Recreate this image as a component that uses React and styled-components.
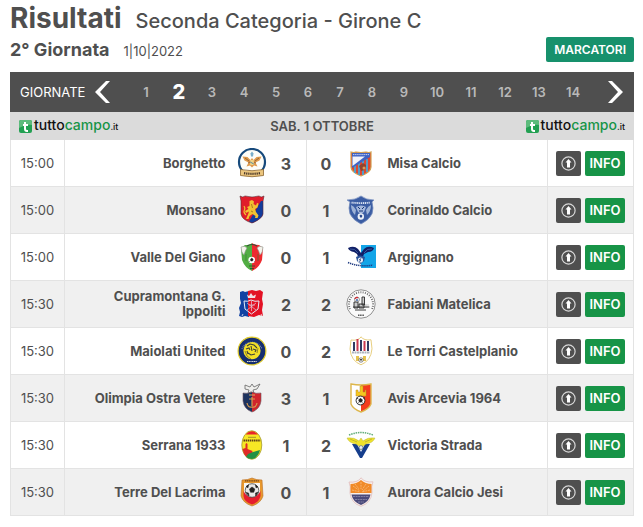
import React, { useState } from "react";
import styled, { createGlobalStyle, css } from "styled-components";

const GlobalStyle = createGlobalStyle`
  * {
    box-sizing: border-box;
  }

  body {
    margin: 0;
    background: #fff;
    color: #4f4f4f;
    font-family: Inter, Roboto, "Liberation Sans", sans-serif;
    font-size: 13px;
  }

  button {
    margin: 0;
    padding: 0;
    border: 0;
    background: none;
    color: inherit;
    font: inherit;
    cursor: pointer;
  }
`;

const Page = styled.main`
  padding: 2px 9px 10px 10px;
`;

const Title = styled.h1`
  display: flex;
  align-items: baseline;
  gap: 14px;
  margin: 0;
  font-size: 28px;
  line-height: 32px;
  font-weight: 700;
  white-space: nowrap;
`;

const Category = styled.span`
  font-size: 20px;
  line-height: 24px;
  font-weight: 500;
`;

const SubHeader = styled.div`
  display: flex;
  align-items: center;
  justify-content: space-between;
  padding: 3px 0 10px;
`;

const Round = styled.h2`
  display: flex;
  align-items: baseline;
  gap: 14px;
  margin: 0;
  font-size: 18px;
  line-height: 24px;
  font-weight: 700;
`;

const RoundDate = styled.span`
  font-size: 13px;
  line-height: 16px;
  font-weight: 400;
`;

const ScorersLink = styled.a`
  padding: 0 8px;
  border-radius: 2px;
  background: #17916c;
  color: #fff;
  font-size: 12px;
  line-height: 25px;
  font-weight: 600;
  text-decoration: none;
`;

const RoundNav = styled.nav`
  display: flex;
  align-items: center;
  height: 40px;
  padding: 0 10px;
  background: #4f4f4f;
  color: #fff;
`;

const NavLabel = styled.span`
  width: 74px;
  font-size: 13px;
`;

const Arrow = styled.button`
  display: flex;
  flex: none;

  svg {
    width: 18px;
    height: 22px;
  }
`;

const RoundList = styled.ol`
  display: flex;
  flex: 1;
  margin: 0 16px 0 18px;
  padding: 0;
  list-style: none;
`;

const RoundItem = styled.li`
  flex: ${({ $wide }) => ($wide ? 34 : 32)} 1 0;
  text-align: center;
`;

const RoundButton = styled.button`
  color: #b9b9b9;
  font-size: 13px;
  line-height: 24px;
  font-weight: 600;

  ${({ $active }) =>
    $active &&
    css`
      color: #fff;
      font-size: 20px;
      font-weight: 800;
    `}
`;

const DayBar = styled.div`
  display: flex;
  align-items: center;
  justify-content: space-between;
  height: 28px;
  padding: 0 9px;
  background: #dbdbdb;
`;

const Day = styled.h3`
  margin: 0;
  font-size: 13px;
  font-weight: 600;
`;

const Brand = styled.a`
  display: flex;
  align-items: center;
  gap: 2px;
  color: #111;
  font-family: Inter, sans-serif;
  font-size: 14px;
  line-height: 16px;
  font-weight: 500;
  text-decoration: none;

  svg {
    width: 13px;
    height: 13px;
  }

  b {
    color: #179447;
    font-weight: 500;
  }

  small {
    font-size: 9px;
  }
`;

const Results = styled.table`
  width: 100%;
  table-layout: fixed;
  border-collapse: separate;
  border-spacing: 0;
`;

const Row = styled.tr`
  &:nth-child(even) {
    background: #f0f0f0;
  }
`;

const Cell = styled.td`
  height: 47px;
  padding: 0;
  border-bottom: 1px solid #e3e3e3;
`;

const TimeCell = styled(Cell)`
  border-left: 1px solid #e3e3e3;
  border-right: 1px solid #e3e3e3;
  text-align: center;
`;

const TeamCell = styled(Cell)`
  padding: ${({ $home }) => ($home ? "0 11px 0 20px" : "0 20px 0 12px")};
  text-align: ${({ $home }) => ($home ? "right" : "left")};
  line-height: 15px;
  font-weight: 700;
`;

const TeamName = styled.span`
  display: inline-block;
  max-width: 140px;
`;

const CrestCell = styled(Cell)`
  svg {
    display: block;
    width: 30px;
    height: 30px;
  }
`;

const ScoreCell = styled(Cell)`
  border-right: ${({ $home }) => ($home ? "1px solid #e3e3e3" : "0")};
  padding-top: 2px;
  font-size: 16px;
  font-weight: 700;
  text-align: center;
`;

const ActionCell = styled(Cell)`
  border-left: 1px solid #e3e3e3;
  border-right: 1px solid #e3e3e3;
`;

const Actions = styled.div`
  display: flex;
  justify-content: center;
  gap: 4px;
`;

const UpButton = styled.button`
  display: grid;
  place-items: center;
  width: 25px;
  height: 25px;
  border-radius: 2px;
  background: #4f4f4f;

  svg {
    width: 15px;
    height: 15px;
  }
`;

const InfoLink = styled.a`
  width: 40px;
  border-radius: 2px;
  background: #179447;
  color: #fff;
  font-size: 13px;
  line-height: 25px;
  font-weight: 600;
  text-align: center;
  text-decoration: none;
`;

const crests = {
  borghetto: (
    <>
      <circle cx="15" cy="14" r="13" fill="#fdfdf8" stroke="#174a7c" strokeWidth="2.2" />
      <path d="M5.5 8.5l5 .5 3 3 1.5-2 1.5 2 3-3 5-.5-2 4-4 2 2 4-3.500-1-2 2-2-2-3.500 1 2-4-4-2z" fill="#df9a4c" />
      <path d="M8 10l4 3M22 10l-4 3M11 15l2-1M19 15l-2-1" stroke="#7a4f2a" strokeWidth=".7" />
      <path d="M13.5 5.5L15 3.5l1.5 2-.5 3h-2z" fill="#79aecb" />
      <path d="M13.2 12h3.600v5h-3.600z" fill="#f0d384" />
      <path d="M13.2 14l3.6 2" stroke="#2f7aa8" strokeWidth=".8" />
      <path d="M3.5 21.5q11.5 2.5 23 0v6q-11.5 2.5-23 0z" fill="#ecc67e" stroke="#8a6430" strokeWidth=".8" />
      <path d="M7 25.2q8 1.2 16 0" fill="none" stroke="#4a382a" strokeWidth="2.2" strokeDasharray="1.3 .8" />
    </>
  ),
  misa: (
    <>
      <path d="M5 4q3 1 5 0 5 1 10 0 3 1 5 0v15q0 5-10 9-10-4-10-9z" fill="#e0462f" stroke="#cfa052" strokeWidth="1.2" />
      <path d="M9 16v9M13 14v13M17 12v15M21 11v13" stroke="#45a7d8" strokeWidth="1.8" />
      <path d="M6 5h18v4L6 20z" fill="#3f63c5" />
      <path d="M6.5 8.5H19L6.5 18z" fill="#f2f3fa" />
      <path d="M7 6.6h16" stroke="#c9d3f0" strokeWidth="1" strokeDasharray="1.4 .7" />
      <path d="M13 18l4-3 3 2-1 5-4 1z" fill="#8f432f" />
      <circle cx="18" cy="20" r="1.5" fill="#d99a56" />
    </>
  ),
  monsano: (
    <>
      <path d="M3 1q3 2 5 0 7 2 14 0 2 2 5 0l-1 5v13q-1 5-11 9Q5 25 4 19V6z" fill="#e01c2b" />
      <path d="M26 6v13q-1 5-11 9l-3-1.5L24 6z" fill="#123c9c" />
      <path d="M3 1q3 2 5 0 7 2 14 0 2 2 5 0l-1 5v13q-1 5-11 9Q5 25 4 19V6z" fill="none" stroke="#5a2632" strokeWidth=".6" />
      <path d="M12.5 6l2.5-1 2 1.5-.5 2.5L19 10.5l1-2.5 1.5.5-1 4-2.5 1.5 1 3 2.5 3.5-1 2.5H18l.5-2-3-2-3 2-1 3H9l2-4.5 1-3-3 1.5-1-2 3.5-2-1.5-2 2.5-1z" fill="#f1c232" />
      <path d="M9 20q-3-3-1.5-5 1-2-.5-4" fill="none" stroke="#f1c232" strokeWidth="1.2" />
      <path d="M14.5 9l1 4M14 16l2 1" stroke="#7d4a10" strokeWidth=".6" />
    </>
  ),
  corinaldo: (
    <>
      <path d="M15 1q5 4 13 4l-2 2q2 6 0 12-3 6-11 10Q7 25 4 19 2 13 4 7L1 5q9 0 14-4z" fill="#3b5da3" stroke="#7b92c0" strokeWidth=".8" />
      <path d="M5.5 7.6q9.5 1 19 0" fill="none" stroke="#dbe3f2" strokeWidth="1.9" strokeDasharray="1.2 .7" />
      <path d="M5 10q3 1 5 5l-1 5q-4-4-4-10zM25 10q-3 1-5 5l1 5q4-4 4-10z" fill="#9db2d6" />
      <path d="M10 12q5-3 10 0l-2 5-3 2-3-2z" fill="#a5b8dc" />
      <path d="M12 12l2 2M18 12l-2 2M13 16h4" stroke="#173777" />
      <circle cx="14.8" cy="21.5" r="3.2" fill="#edf1f8" />
      <path d="M13.5 20.5l1.5-1 1.4 1.2-.6 1.8h-1.6z" fill="#28478d" />
    </>
  ),
  valle: (
    <>
      <path d="M15 1q2 2 7 2l4 3-1 12q-3 8-10 11z" fill="#ed2a2f" />
      <path d="M15 1q-2 2-7 2L4 6l1 12q3 8 10 11z" fill="#52ad43" />
      <path d="M10 4q5-3 10 0" fill="none" stroke="#354c37" strokeWidth="1.1" />
      <path d="M4 5q4-2 6 1-2 3-3 7-3-3-3-8zM26 5q-4-2-6 1 2 3 3 7 3-3 3-8z" fill="#f4f4ec" stroke="#8c9289" strokeWidth=".6" />
      <path d="M9 12v7M21 12v7" stroke="#37782f" strokeWidth=".6" />
      <circle cx="14.7" cy="18" r="3.3" fill="#fff" />
      <path d="M13.4 17.3l1.4-1.2 1.4 1.2-.7 1.7h-1.6zM11.8 19l1 1M17 20l.8-.8" fill="#222" stroke="#222" strokeWidth=".5" />
      <path d="M12 24h6M13 26.5h4" stroke="#274b2c" strokeWidth=".8" />
    </>
  ),
  argignano: (
    <>
      <path d="M15 3h15v23H15z" fill="#13a5e8" />
      <path d="M2 6q6-3 10 1l3 4 3-4q4-4 10-1-1 4-6 4l-4 2-2 5h-3l-2-5-3-2Q3 9 2 6z" fill="#101f66" />
      <path d="M4 7q5-1 8 4M26 7q-5-1-8 4" fill="none" stroke="#4668ab" strokeWidth=".8" />
      <path d="M10 15q4-3 9 0l-1 4-3.5 3-3.5-3z" fill="#2a5299" />
      <circle cx="14.4" cy="18" r="2.6" fill="#e8eef6" />
      <path d="M13 17l2 2M15 16l-1.5 4" stroke="#24417c" strokeWidth=".7" />
      <path d="M2 20.5q12 5 25 2.5" fill="none" stroke="#203c82" strokeWidth="1.5" strokeDasharray="1.3 .8" />
    </>
  ),
  cupramontana: (
    <>
      <path d="M3 3l3-1 2 1 4-1v26l-4-1-3 1-3-1 1-4-1-4 2-5-1-4z" fill="#1242a3" />
      <path d="M11 2l4-1 4 1 4-1 3 2-1 7 1 5-1 6 1 6-4-1-5 2-6-1z" fill="#e31225" />
      <path d="M10 5.5l2 1.5 2-3 2 3 3-1.5-1 3.5h-7z" fill="#f0dfe5" />
      <path d="M7 12q4 1 7-1 4 2 8 1l-1 8-6.5 5L8 20z" fill="none" stroke="#e6eaf5" strokeWidth="1" />
      <path d="M10 14l9 7M19 14l-9 7M12 16h6M14.5 12v10" stroke="#dfc9d8" strokeWidth=".7" />
      <path d="M6 25l-1 2M24 25l1 2" stroke="#f1f1f1" strokeWidth=".8" />
    </>
  ),
  fabiani: (
    <>
      <circle cx="15" cy="15" r="14.2" fill="#fafafa" stroke="#777" strokeWidth=".8" />
      <path d="M4 20A12 12 0 1 1 26 20" fill="none" stroke="#666" strokeWidth="1.9" strokeDasharray=".9 1.4" />
      <path d="M12 26.2h6" stroke="#555" strokeWidth="1.4" strokeDasharray="1.2 .5" />
      <path d="M7 18h16M8 13h4v6H8zM16 8h2.5v8H16zM13 15h5v4h-5zM9 21h11" fill="#ccc" stroke="#292929" strokeWidth=".9" />
      <path d="M19 16h4M19 18h5" stroke="#777" strokeWidth=".7" strokeDasharray=".8 .5" />
      <circle cx="11" cy="10.5" r="2.4" fill="#fff" stroke="#444" strokeWidth=".6" />
      <path d="M8.7 9.7q2-2 3.2-.7" stroke="#d12631" strokeWidth="1.3" fill="none" />
      <circle cx="11" cy="11" r=".9" fill="#234f9a" />
    </>
  ),
  maiolati: (
    <>
      <circle cx="15" cy="15" r="13.9" fill="#152e70" stroke="#e2cd2c" strokeWidth="1.2" />
      <path d="M5 13A10.8 10.8 0 0 1 25 13" fill="none" stroke="#8491b2" strokeWidth="1.3" strokeDasharray=".9 .9" />
      <circle cx="15" cy="14.7" r="8.6" fill="#f2df27" />
      <path d="M10 10l3-2 4 1 3 3M9 13l3-1 1 2M16 13l3 1-1 2M11 17l3 2 4-1M10 15l1 3M14 10l1 5" fill="none" stroke="#3b3f3a" strokeWidth="1.1" />
      <path d="M8 15l2 5 4 3M21 12l-1 5" fill="none" stroke="#887d29" strokeWidth=".9" />
      <path d="M10 25.5h10" stroke="#d7d9da" strokeWidth="1.2" strokeDasharray="1.2 .5" />
    </>
  ),
  torri: (
    <>
      <path d="M15 .8q3 4 10 3l1 9q-1 12-11 16Q5 25 4 13l1-9q7 1 10-3z" fill="#fff" stroke="#e8cf81" strokeWidth="1" />
      <path d="M8 6v9M15 4v11M22 5v10" stroke="#303b61" strokeWidth="2" />
      <path d="M11.5 3v12M18.5 5v10" stroke="#cc3a4f" strokeWidth="2" />
      <path d="M6 16.5h18" stroke="#aeb3bd" strokeWidth="2" strokeDasharray="2 .5" />
      <path d="M10 20h3v5h-3zM17 20h3v5h-3z" fill="#e6c34f" />
      <circle cx="15" cy="24" r="2.2" fill="#fff" stroke="#555" strokeWidth=".7" />
      <path d="M14 23h2v1.5h-2z" fill="#444" />
    </>
  ),
  olimpia: (
    <>
      <path d="M8 2l5 2 2-3 2 3 6-3-3 5-4 1 1 3-3-1-3 1 1-3-4-1z" fill="#eeeeec" stroke="#666" strokeWidth=".8" />
      <path d="M6 10q5 1 9-1v20Q7 26 6 18z" fill="#1d335f" />
      <path d="M24 10q-5 1-9-1v20q8-3 9-11z" fill="#d0252c" />
      <path d="M6 10q5 1 9-1 4 2 9 1v8q-1 8-9 11-8-3-9-11z" fill="none" stroke="#6b5563" strokeWidth=".6" />
      <path d="M15 14v9M12 16h6M10 20q1 5 5 4 4 1 5-4" fill="none" stroke="#d69b50" strokeWidth="1.2" />
      <path d="M12 12h6" stroke="#d7b168" />
    </>
  ),
  avis: (
    <>
      <path d="M5 1q10 2 20 0v20q-2 5-10 8-8-3-10-8z" fill="#fff" />
      <path d="M15 2q6 0 10-1v20q-2 5-10 8z" fill="#f43b1d" />
      <path d="M5 1q10 2 20 0v20q-2 5-10 8-8-3-10-8z" fill="none" stroke="#ddb64b" strokeWidth="1.4" />
      <path d="M10 11V7h2v2h2V3h3v6h2V7h1v6h-10z" fill="#f7c71e" stroke="#b78b2b" strokeWidth=".5" />
      <circle cx="14.5" cy="17.5" r="4.4" fill="#fff" stroke="#222" strokeWidth=".9" />
      <path d="M12.8 16.8l1.7-1.3 1.8 1.3-.7 2.2h-2.1zM10.5 15l1.7.5M17.3 15.4l1.5-.7M11.5 20.6l1.2-1M17.5 20.7l-1.2-1" fill="#222" stroke="#222" strokeWidth=".9" />
    </>
  ),
  serrana: (
    <>
      <ellipse cx="14.8" cy="15" rx="10" ry="14.3" fill="#f7e725" stroke="#a39b34" strokeWidth=".8" />
      <path d="M8.5 4.5Q15-2 21 4.5z" fill="#e8232c" />
      <path d="M5.5 19l3-1v-4l1-1 1 1v5l5 2-1 7q-7 1-9-9z" fill="#df2a28" />
      <path d="M11 24l5-2 7-2q-2 8-8 9-4 0-6-2z" fill="#239045" />
      <path d="M6.5 10.5h17" stroke="#5b3d1d" strokeWidth="2" strokeDasharray="1.5 .6" />
      <path d="M11 7.3h8" stroke="#9a8b28" strokeWidth=".9" />
    </>
  ),
  victoria: (
    <>
      <path d="M3 5q12-5 24 0" fill="none" stroke="#62ad79" strokeWidth="1.5" strokeDasharray="1.5 .8" />
      <path d="M6 14h5l4 8 4-8h5l-8 14h-2z" fill="#163e8c" />
      <path d="M1 8q7-1 12 3l2-3 2 3q5-4 12-3-2 5-9 6l-3 2-2 4-2-4-3-2q-7-1-9-6z" fill="#f0e32b" stroke="#b9b444" strokeWidth=".5" />
      <path d="M4 9l7 3M26 9l-7 3" stroke="#a49c2c" strokeWidth=".6" />
      <circle cx="15" cy="17.5" r="1.9" fill="#eef1ef" stroke="#3a5778" strokeWidth=".6" />
    </>
  ),
  terre: (
    <>
      <path d="M5 3q6 0 10-2 4 2 10 2l1 16q-2 7-11 10Q6 26 4 19z" fill="#e8982c" stroke="#b86f27" strokeWidth=".6" />
      <path d="M7 6h16v13q-1 5-8 8-7-3-8-8z" fill="#f8f6f2" />
      <path d="M6.5 14q3 6 8.5 6t8.5-6v5q-1 6-8.5 8.5Q7 25 6.5 19z" fill="#e51e2e" />
      <path d="M8 3.8h14" stroke="#704318" strokeWidth="1.3" strokeDasharray="1.3 .5" />
      <circle cx="15" cy="13.5" r="6.8" fill="#e8e8e8" stroke="#444" strokeWidth=".8" />
      <path d="M12.5 12l2.5-2 2.8 2-1 3.2h-3.3zM9 9.5l2.5-1.7-.5 3zM18.5 7.8L21 10l-2 .8zM9 15.5l2.5.5.5 3zM18.5 16l2.5-.8-2.2 3.8z" fill="#222" stroke="#222" strokeWidth=".6" />
    </>
  ),
  aurora: (
    <>
      <path d="M15 .8q4 5 12 4-2 4-1 11-1 10-11 13.5Q5 26 4 16q1-7-1-11 8 1 12-4z" fill="#f7efeb" stroke="#e0b5b5" strokeWidth=".7" />
      <path d="M4.5 7q6 0 10.5-4 4.5 4 10.5 4v9h-21z" fill="#f18a28" />
      <path d="M5.5 17.5h19q-1 7-9.5 10.5-8.5-3.500-9.5-10.5z" fill="#4b4a7b" />
      <path d="M7 9l7 5M9 7l4 5M15 5v7M20 7l-4 6M23 9l-7 6M6 13l8 2M24 13l-8 2" stroke="#f8cf9d" strokeWidth=".6" strokeDasharray="2 .8" />
      <path d="M7 19.5h16M9 22.5h12M12 25h6" stroke="#9a98b5" strokeWidth=".7" strokeDasharray="2 .6" />
    </>
  ),
};

const matches = [
  { time: "15:00", home: "Borghetto", homeCrest: "borghetto", hg: 3, ag: 0, away: "Misa Calcio", awayCrest: "misa" },
  { time: "15:00", home: "Monsano", homeCrest: "monsano", hg: 0, ag: 1, away: "Corinaldo Calcio", awayCrest: "corinaldo" },
  { time: "15:00", home: "Valle Del Giano", homeCrest: "valle", hg: 0, ag: 1, away: "Argignano", awayCrest: "argignano" },
  { time: "15:30", home: "Cupramontana G. Ippoliti", homeCrest: "cupramontana", hg: 2, ag: 2, away: "Fabiani Matelica", awayCrest: "fabiani" },
  { time: "15:30", home: "Maiolati United", homeCrest: "maiolati", hg: 0, ag: 2, away: "Le Torri Castelplanio", awayCrest: "torri" },
  { time: "15:30", home: "Olimpia Ostra Vetere", homeCrest: "olimpia", hg: 3, ag: 1, away: "Avis Arcevia 1964", awayCrest: "avis" },
  { time: "15:30", home: "Serrana 1933", homeCrest: "serrana", hg: 1, ag: 2, away: "Victoria Strada", awayCrest: "victoria" },
  { time: "15:30", home: "Terre Del Lacrima", homeCrest: "terre", hg: 0, ag: 1, away: "Aurora Calcio Jesi", awayCrest: "aurora" },
];

const rounds = Array.from({ length: 14 }, (_, i) => i + 1);

const Crest = ({ name }) => (
  <svg viewBox="0 0 30 30" aria-hidden="true">
    {crests[name]}
  </svg>
);

const Logo = () => (
  <Brand href="#tuttocampo">
    <svg viewBox="0 0 13 13" aria-hidden="true">
      <rect width="13" height="13" rx="2" fill="#22a052" />
      <path d="M0 2q0-2 2-2h9q2 0 2 2v3Q7 4 0 8z" fill="#5dbb7c" />
      <path d="M6 2v7q0 2 2 2h1M4 5h5" fill="none" stroke="#fff" strokeWidth="2" />
    </svg>
    <span>
      tutto<b>campo</b>
      <small>.it</small>
    </span>
  </Brand>
);

const MatchRow = ({ match }) => (
  <Row>
    <TimeCell>{match.time}</TimeCell>
    <TeamCell $home>
      <TeamName>{match.home}</TeamName>
    </TeamCell>
    <CrestCell>
      <Crest name={match.homeCrest} />
    </CrestCell>
    <ScoreCell $home>{match.hg}</ScoreCell>
    <ScoreCell>{match.ag}</ScoreCell>
    <CrestCell>
      <Crest name={match.awayCrest} />
    </CrestCell>
    <TeamCell>
      <TeamName>{match.away}</TeamName>
    </TeamCell>
    <ActionCell>
      <Actions>
        <UpButton type="button" aria-label={`${match.home} - ${match.away}`}>
          <svg viewBox="0 0 15 15" aria-hidden="true">
            <circle cx="7.5" cy="7.5" r="6.6" fill="none" stroke="#d8d8d8" strokeWidth="1.2" />
            <path d="M7.5 3L10.5 6.5H9V11.5H6V6.5H4.5z" fill="#fff" />
          </svg>
        </UpButton>
        <InfoLink href="#info">INFO</InfoLink>
      </Actions>
    </ActionCell>
  </Row>
);

const App = () => {
  const [round, setRound] = useState(2);

  return (
    <Page>
      <GlobalStyle />
      <Title>
        Risultati <Category>Seconda Categoria - Girone C</Category>
      </Title>
      <SubHeader>
        <Round>
          2° Giornata <RoundDate>1|10|2022</RoundDate>
        </Round>
        <ScorersLink href="#marcatori">MARCATORI</ScorersLink>
      </SubHeader>

      <RoundNav>
        <NavLabel>GIORNATE</NavLabel>
        <Arrow type="button" aria-label="Precedente" onClick={() => setRound(Math.max(1, round - 1))}>
          <svg viewBox="0 0 18 22" aria-hidden="true">
            <path d="M12 0h4L6 11l10 11h-4L1 11z" fill="#fff" />
          </svg>
        </Arrow>
        <RoundList>
          {rounds.map((n) => (
            <RoundItem key={n} $wide={n > 9 || n === round}>
              <RoundButton type="button" $active={n === round} onClick={() => setRound(n)}>
                {n}
              </RoundButton>
            </RoundItem>
          ))}
        </RoundList>
        <Arrow type="button" aria-label="Successiva" onClick={() => setRound(Math.min(14, round + 1))}>
          <svg viewBox="0 0 18 22" aria-hidden="true">
            <path d="M6 0H2l10 11L2 22h4l11-11z" fill="#fff" />
          </svg>
        </Arrow>
      </RoundNav>

      <DayBar>
        <Logo />
        <Day>SAB. 1 OTTOBRE</Day>
        <Logo />
      </DayBar>

      <Results>
        <colgroup>
          <col width="55" />
          <col />
          <col width="30" />
          <col width="40" />
          <col width="39" />
          <col width="30" />
          <col />
          <col width="87" />
        </colgroup>
        <tbody>
          {matches.map((match) => (
            <MatchRow key={match.home} match={match} />
          ))}
        </tbody>
      </Results>
    </Page>
  );
};

export default App;
